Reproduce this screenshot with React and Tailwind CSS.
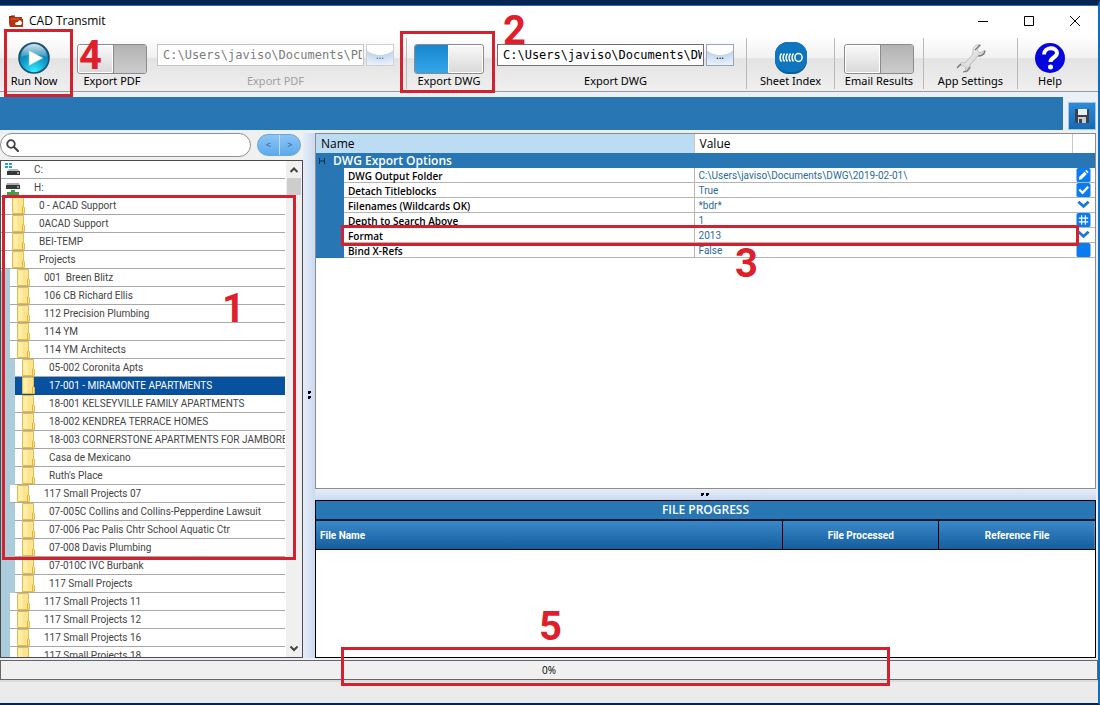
import React from "react";

const drives = ["C:", "H:"];

const folders = [
  { name: "0 - ACAD Support" },
  { name: "0ACAD Support" },
  { name: "BEI-TEMP" },
  {
    name: "Projects",
    children: [
      { name: "001  Breen Blitz" },
      { name: "106 CB Richard Ellis" },
      { name: "112 Precision Plumbing" },
      { name: "114 YM" },
      {
        name: "114 YM Architects",
        children: [
          { name: "05-002 Coronita Apts" },
          { name: "17-001 - MIRAMONTE APARTMENTS", selected: true },
          { name: "18-001 KELSEYVILLE FAMILY APARTMENTS" },
          { name: "18-002 KENDREA TERRACE HOMES" },
          { name: "18-003 CORNERSTONE APARTMENTS FOR JAMBORE.." },
          { name: "Casa de Mexicano" },
          { name: "Ruth's Place" },
        ],
      },
      {
        name: "117 Small Projects 07",
        children: [
          { name: "07-005C Collins and Collins-Pepperdine Lawsuit" },
          { name: "07-006 Pac Palis Chtr School Aquatic Ctr" },
          { name: "07-008 Davis Plumbing" },
          { name: "07-010C IVC Burbank" },
          { name: "117 Small Projects" },
        ],
      },
      { name: "117 Small Projects 11" },
      { name: "117 Small Projects 12" },
      { name: "117 Small Projects 16" },
      { name: "117 Small Projects 18" },
    ],
  },
];

const options = [
  { name: "DWG Output Folder", value: "C:\\Users\\javiso\\Documents\\DWG\\2019-02-01\\", icon: "edit" },
  { name: "Detach Titleblocks", value: "True", icon: "check" },
  { name: "Filenames (Wildcards OK)", value: "*bdr*", icon: "down" },
  { name: "Depth to Search Above", value: "1", icon: "number" },
  { name: "Format", value: "2013", icon: "down" },
  { name: "Bind X-Refs", value: "False", icon: "empty" },
];

const AppIcon = () => (
  <svg viewBox="0 0 14 12" className="h-3 w-[14px]">
    <path d="M0 1h5l1 1h7v2h1v8H1L0 9z" fill="#b5330f" />
    <path d="M0 3 2 1h4" stroke="#6d1c05" fill="none" />
    <path d="M6 9c0-2 2-2 3-2 0-1 2-2 3-1l1 2-1 2H7z" fill="#fff" />
    <path d="M2 4h8" stroke="#e0683c" />
  </svg>
);

const PlayIcon = () => (
  <svg viewBox="0 0 32 32" className="size-8">
    <defs>
      <radialGradient id="play" cx="50%" cy="95%" r="85%">
        <stop offset="0" stopColor="#35f0ff" />
        <stop offset="0.5" stopColor="#12a3cf" />
        <stop offset="1" stopColor="#0a6b9d" />
      </radialGradient>
      <linearGradient id="shine" x2="0" y2="1">
        <stop offset="0" stopColor="#fff" stopOpacity="0.85" />
        <stop offset="1" stopColor="#fff" stopOpacity="0.15" />
      </linearGradient>
    </defs>
    <circle cx="16" cy="16" r="15" fill="url(#play)" stroke="#1a4f75" strokeWidth="1.6" />
    <path d="M3 15a13 13 0 0 1 26 0c-7-3-19-3-26 0z" fill="url(#shine)" />
    <path d="M11 8.500v15L25 16z" fill="#fff" stroke="#8ad0e8" strokeWidth="0.5" />
  </svg>
);

const SheetIcon = () => (
  <svg viewBox="0 0 32 32" className="size-8">
    <path d="M13 0h6a13 13 0 0 1 13 13v6c0 7-7 13-13 13h-6C7 32 0 26 0 19v-6A13 13 0 0 1 13 0z" fill="#0a5c9e" />
    <path d="M13 0h6a13 13 0 0 1 13 13v5c0 7-7 12-13 12h-6C7 30 0 25 0 18v-5A13 13 0 0 1 13 0z" fill="#0f75bf" />
    <g fill="none" stroke="#fff" strokeWidth="1.500">
      <path d="M6.500 11.500q-3 4 0 8M9.500 11.500q-3 4 0 8M12.500 11.500q-3 4 0 8M15.500 11.500q-3 4 0 8M18.500 11.500q-3 4 0 8" />
      <ellipse cx="23.500" cy="15.500" rx="3.600" ry="3.900" />
    </g>
  </svg>
);

const WrenchIcon = () => (
  <svg viewBox="0 0 32 32" className="size-8">
    <defs>
      <linearGradient id="steel" x2="1" y2="1">
        <stop offset="0" stopColor="#fafafa" />
        <stop offset="0.55" stopColor="#dedede" />
        <stop offset="1" stopColor="#8d8d8d" />
      </linearGradient>
    </defs>
    <path
      d="M26 3c-4-1-8 1-8 5l0 4-8 9c-3-1-5 0-7 3l5-1 3 3-1 4c4 0 6-3 5-7l8-9c4 1 7-1 7-6l-5 3-3-3z"
      fill="url(#steel)"
      stroke="#b5b5b5"
      strokeWidth="0.800"
    />
    <path d="M20 8l5-5M2 26l4-4M8 30l4-1 3-4M23 14c3 0 6-1 7-5" stroke="#777" fill="none" strokeWidth="1.200" />
  </svg>
);

const HelpIcon = () => (
  <svg viewBox="0 0 30 30" className="my-px size-[30px]">
    <circle cx="15" cy="15" r="15" fill="#0505dc" />
    <path d="M9 11.500c0-8 13-8 13-1.500 0 4.500-6.500 4.500-6.500 9" stroke="#fff" strokeWidth="4" fill="none" />
    <circle cx="15.500" cy="24" r="2.500" fill="#fff" />
  </svg>
);

const FolderIcon = () => (
  <svg viewBox="0 0 13 17" className="h-[17px] w-[13px] shrink-0">
    <path d="M.5.500h11v9l1 1v6H.5z" fill="#fbe48b" stroke="#e0bd53" />
    <path d="M1.500 1.500h4v14h-4z" fill="#fdeea9" />
    <path d="M10.500 16v-5l1-2" stroke="#d9b23e" fill="none" />
  </svg>
);

const DriveIcon = ({ network }) => (
  <svg viewBox="0 0 16 16" className="size-4 shrink-0">
    {network ? (
      <>
        <path d="M2 3h12l1 3v3H1V6z" fill="#a9adb0" />
        <path d="M1 5h14v4H1z" fill="#35393c" />
        <path d="M6 10h4v2h4v3H2v-3h4z" fill="#3f9f4c" />
        <path d="M12 7h2" stroke="#fff" />
      </>
    ) : (
      <>
        <path d="M0 1h3v2H0zM4 1h3v2H4zM0 4h3v2H0zM4 4h3v2H4z" fill="#29a5c4" />
        <path d="M4 7h9l2 3H2z" fill="#b5b9bc" />
        <path d="M2 9h13v4H2z" fill="#35393c" />
        <path d="M12 11h2" stroke="#fff" />
      </>
    )}
  </svg>
);

const SaveIcon = () => (
  <svg viewBox="0 0 14 14" className="size-[14px]">
    <path d="M0 0h14v14H1L0 13z" fill="#3c4048" />
    <path d="M3 0h9v6H3z" fill="#e9eef2" />
    <path d="M3 8h8v6H3z" fill="#c9cdd2" />
    <path d="M4 10h3v4H4z" fill="#3c4048" />
  </svg>
);

const OptionIcon = ({ type }) => (
  <svg viewBox="0 0 15 15" className="block h-[14px] w-[15px]">
    {type === "down" ? (
      <path d="M2 4l5.500 5L13 4" stroke="#1b7ad6" strokeWidth="3" fill="none" />
    ) : (
      <rect width="15" height="15" rx="2" fill="#0a7cf0" />
    )}
    {type === "edit" && <path d="M2.500 12.500l.5-3L8.500 4l2.500 2.500L5.500 12zM9.300 3.200l1.200-1.200 2.500 2.500-1.200 1.200z" fill="#fff" />}
    {type === "check" && <path d="M3 7l3.500 3.500L12.500 4" stroke="#fff" strokeWidth="2.400" fill="none" />}
    {type === "number" && <path d="M5.500 2.500v10M9.500 2.500v10M2.500 5.500h10M2.500 9.500h10" stroke="#fff" strokeWidth="1.200" />}
  </svg>
);

const Separator = () => <div className="my-[2px] w-px self-stretch bg-[#b9b9b9]" />;

const ToolButton = ({ icon, label, className }) => (
  <button type="button" className={`flex shrink-0 flex-col items-center pt-[6px] ${className}`}>
    {icon}
    <span className="whitespace-nowrap text-[11px] leading-[14px]">{label}</span>
  </button>
);

const Toggle = ({ label, checked, className }) => (
  <label className={`flex w-[70px] shrink-0 flex-col items-center pt-2 ${className}`}>
    <input type="checkbox" defaultChecked={checked} className="sr-only" />
    <span className="flex h-[30px] w-full overflow-hidden rounded-[3px] border border-[#8b8b8b]">
      {checked && <span className="flex-1 bg-linear-to-b from-[#1387cf] to-[#35a5ea]" />}
      <span className="flex-1 rounded-[2px] border border-white bg-linear-to-b from-[#f8f8f8] to-[#dadada]" />
      {!checked && <span className="flex-1 border-l border-[#8b8b8b] bg-linear-to-b from-[#b3b3b3] to-[#cccccc]" />}
    </span>
    <span className="whitespace-nowrap text-[11px] leading-[14px]">{label}</span>
  </label>
);

const PathField = ({ id, label, value, disabled }) => (
  <div className="flex min-w-0 flex-1 flex-col gap-2 pt-2">
    <div className="flex gap-[2px]">
      <input
        id={id}
        type="text"
        defaultValue={value}
        disabled={disabled}
        className={`h-[22px] min-w-0 flex-1 border bg-white pr-px pl-[5px] font-['DejaVu_Sans_Mono',monospace] text-[12px] ${
          disabled ? "border-[#c4c4c4] text-[#7d7d7d]" : "border-[#6f6f6f] text-black"
        }`}
      />
      <button
        type="button"
        disabled={disabled}
        aria-label={`Browse ${label}`}
        className={`h-[22px] w-7 border bg-[radial-gradient(ellipse_60%_50%_at_50%_0%,#ffffff_96%,#c3d6ee_100%,#e9f1fb_200%)] text-[10px] leading-[14px] ${
          disabled ? "border-[#d0d0d0] text-[#4b5f7d]" : "border-[#9aa5b3] text-black"
        }`}
      >
        ...
      </button>
    </div>
    <label htmlFor={id} className={`text-center text-[11px] leading-[14px] ${disabled ? "text-[#a0a0a0]" : ""}`}>
      {label}
    </label>
  </div>
);

const TreeNode = ({ node, depth }) => (
  <li>
    <button
      type="button"
      className={`flex h-[18px] w-full items-center gap-[14px] border-b text-left ${depth === 0 ? "pl-[11px]" : "pl-[7px]"} ${
        node.selected ? "border-[#0a4c94] bg-[#07519f] text-white" : "border-[#a8a8a8] bg-white text-[#444]"
      }`}
    >
      <FolderIcon />
      <span className="whitespace-pre">{node.name}</span>
    </button>
    {node.children && (
      <ul className={`rounded-l-[4px] bg-[#abcddb] ${depth === 0 ? "pl-[9px]" : "pl-[5px]"}`}>
        {node.children.map((child) => (
          <TreeNode key={child.name} node={child} depth={depth + 1} />
        ))}
      </ul>
    )}
  </li>
);

// red callout number
const Step = ({ n, className }) => (
  <span className={`pointer-events-none absolute z-20 font-['Roboto',sans-serif] text-[40px] font-bold leading-none text-[#e01f2d] ${className}`}>
    {n}
  </span>
);

// red callout frame
const Frame = ({ className }) => (
  <span className={`pointer-events-none absolute z-10 border-[3px] border-[#d3222f] ${className}`} />
);

const App = () => {
  return (
    <div className="flex h-screen flex-col border-r-2 border-t-[5px] border-b-2 border-t-[#032655] border-r-[#0f6fbe] border-b-[#032655] bg-[#ebf0f6] font-['Noto_Sans','Open_Sans',sans-serif] text-[11px] text-black">
      {/* title bar */}
      <header className="flex h-[31px] shrink-0 items-center border-t border-[#2f66a8] bg-white pl-[9px] pr-[17px]">
        <AppIcon />
        <h1 className="flex-1 pl-[6px] font-['Open_Sans',sans-serif] text-[12px]">CAD Transmit</h1>
        <div className="flex gap-[34px]">
          <button type="button" aria-label="Minimize">
            <svg viewBox="0 0 12 12" className="size-3"><path d="M1 6.500h10" stroke="#000" /></svg>
          </button>
          <button type="button" aria-label="Maximize">
            <svg viewBox="0 0 12 12" className="size-3"><path d="M1.500 1.500h9v9h-9z" stroke="#000" fill="none" /></svg>
          </button>
          <button type="button" aria-label="Close">
            <svg viewBox="0 0 12 12" className="size-3"><path d="M1 1l10 10M11 1L1 11" stroke="#000" fill="none" /></svg>
          </button>
        </div>
      </header>

      {/* toolbar */}
      <div className="flex h-14 shrink-0 border-b border-[#9b9b9b] bg-[linear-gradient(#ffffff,#f1f1f1_40%,#e3e3e3_41%,#efefef)] pr-4">
        <div className="relative flex">
          <ToolButton icon={<PlayIcon />} label="Run Now" className="w-[68px]" />
          <Frame className="-top-[7px] left-1 h-[68px] w-[69px]" />
        </div>
        <div className="relative mr-[10px] ml-[9px]">
          <Toggle label="Export PDF" />
          <Step n="4" className="top-0 left-[2px]" />
        </div>
        <PathField id="pdf-path" label="Export PDF" value="C:\Users\javiso\Documents\PDF" disabled />
        <div className="relative mr-[13px] ml-3 flex">
          <Separator />
          <Toggle label="Export DWG" checked className="ml-[7px]" />
          <Frame className="-top-[5px] -right-[11px] -left-[6px] h-[62px]" />
          <Step n="2" className="-top-[25px] left-[97px]" />
        </div>
        <PathField id="dwg-path" label="Export DWG" value="C:\Users\javiso\Documents\DWG" />
        <div className="w-3" />
        <Separator />
        <ToolButton icon={<SheetIcon />} label="Sheet Index" className="w-[87px]" />
        <Separator />
        <Toggle label="Email Results" className="mx-[9px]" />
        <Separator />
        <ToolButton icon={<WrenchIcon />} label="App Settings" className="w-[93px]" />
        <Separator />
        <ToolButton icon={<HelpIcon />} label="Help" className="w-16" />
      </div>

      {/* blue band with save */}
      <div className="mt-[5px] flex h-[33px] shrink-0 items-center gap-[5px] pr-[2px]">
        <div className="h-full flex-1 bg-[#2876b4]" />
        <button type="button" aria-label="Save" className="mt-1 flex size-7 items-center justify-center border border-[#9cc6ea] bg-linear-to-b from-[#2d8ad6] to-[#1769b4]">
          <SaveIcon />
        </button>
      </div>

      <main className="mt-[3px] flex min-h-0 flex-1">
        {/* folder tree */}
        <aside className="flex w-[303px] shrink-0 flex-col bg-[#f0f0f0]">
          <div className="mb-[2px] flex h-[25px] shrink-0 gap-[6px] pr-[2px]">
            <label className="flex h-6 flex-1 items-center rounded-full border border-[#8f8f8f] bg-white pl-[5px]">
              <svg viewBox="0 0 13 13" className="size-[13px]">
                <circle cx="5" cy="5" r="3.800" fill="none" stroke="#444" strokeWidth="1.800" />
                <path d="M8 8l4 4" stroke="#444" strokeWidth="2.200" strokeLinecap="round" />
              </svg>
              <input type="text" aria-label="Search folders" className="ml-2 min-w-0 flex-1 outline-none" />
            </label>
            <div className="mt-px flex h-[22px] w-11 overflow-hidden rounded-full border border-[#6ba6dc] bg-linear-to-b from-[#8cc4f4] to-[#5caaee] text-[9px] text-[#2d5f91]">
              <button type="button" aria-label="Previous" className="flex-1 border-r border-[#c4e0f8]">&lt;</button>
              <button type="button" aria-label="Next" className="flex-1">&gt;</button>
            </div>
          </div>
          <div className="relative flex min-h-0 flex-1 border border-[#4a4a4a] bg-white">
            <div className="min-w-0 flex-1 overflow-hidden font-['Roboto',sans-serif] text-[10px] leading-[14px]">
              <ul>
                {drives.map((drive) => (
                  <li key={drive}>
                    <button type="button" className="flex h-[18px] w-full items-center gap-[13px] border-b border-[#a8a8a8] pl-1 text-left text-[#444]">
                      <DriveIcon network={drive === "H:"} />
                      {drive}
                    </button>
                  </li>
                ))}
                {folders.map((node) => (
                  <TreeNode key={node.name} node={node} depth={0} />
                ))}
              </ul>
            </div>
            <div className="ml-px flex w-4 flex-col items-center bg-[#f0f0f0]">
              <svg viewBox="0 0 16 17" className="h-[17px] w-4"><path d="M4.500 11L8 7.500l3.500 3.500" stroke="#444" strokeWidth="2" fill="none" /></svg>
              <div className="h-[17px] w-[14px] bg-[#cdcdcd]" />
              <div className="flex-1" />
              <svg viewBox="0 0 16 17" className="h-[17px] w-4"><path d="M4.500 6.500L8 10l3.500-3.500" stroke="#444" strokeWidth="2" fill="none" /></svg>
            </div>
            <Frame className="top-[34px] left-px h-[365px] w-[294px]" />
            <Step n="1" className="top-[128px] left-[221px]" />
          </div>
        </aside>

        <div className="flex w-3 shrink-0 items-center justify-center bg-linear-to-r from-[#e6edf8] to-[#cbdaf0]">
          <svg viewBox="0 0 3 9" className="h-[9px] w-[3px]"><path d="M0 0h3v2H2v1H0zM0 5h3v2H2v1H0z" /></svg>
        </div>

        <section className="mr-[2px] flex min-w-0 flex-1 flex-col">
          {/* property grid */}
          <div className="relative min-h-0 flex-1 border border-[#8c8c8c] bg-white">
            <table className="w-full table-fixed border-separate border-spacing-0 text-left font-['Open_Sans',sans-serif] text-[10px] leading-[14px]">
              <colgroup>
                <col className="w-7" />
                <col className="w-[45%]" />
                <col />
                <col className="w-[22px]" />
              </colgroup>
              <thead>
                <tr className="text-[12px] leading-[19px]">
                  <th colSpan={2} className="border-r border-[#c8c8c8] bg-[#bcdcf4] pl-[5px] font-normal">Name</th>
                  <th className="border-r border-[#c8c8c8] pl-[5px] font-normal">Value</th>
                  <th />
                </tr>
              </thead>
              <tbody>
                <tr className="bg-[#2876b4] text-[12px] text-white">
                  <th colSpan={4} className="font-semibold">
                    <span className="flex h-[15px] items-center gap-2 pl-[3px]">
                      <svg viewBox="0 0 6 6" className="size-[6px]"><path d="M.5 0v6M5.500 0v6M1 3h4" stroke="#0b2d52" /></svg>
                      DWG Export Options
                    </span>
                  </th>
                </tr>
                {options.map((option) => (
                  <tr key={option.name}>
                    <td className="bg-[#2876b4]" />
                    <th className="border-r border-b border-[#b5b5b5] pt-[2px] pl-1 leading-3 font-semibold">{option.name}</th>
                    <td className="border-b border-[#b5b5b5] pt-[2px] pl-1 font-['Roboto',sans-serif] leading-3 text-[#2a6a9c]">{option.value}</td>
                    <td className="border-b border-[#b5b5b5] pl-[3px]">
                      <button type="button" aria-label={`Edit ${option.name}`} className="block">
                        <OptionIcon type={option.icon} />
                      </button>
                    </td>
                  </tr>
                ))}
              </tbody>
            </table>
            <Frame className="top-[91px] right-4 left-[25px] h-[21px]" />
            <Step n="3" className="top-[110px] left-[419px]" />
          </div>

          <div className="flex h-[11px] shrink-0 items-center justify-center bg-linear-to-b from-[#e6edf8] to-[#cbdaf0]">
            <svg viewBox="0 0 9 3" className="h-[3px] w-[9px]"><path d="M0 0h3v2H2v1H0zM5 0h3v2H7v1H5z" /></svg>
          </div>

          {/* file progress */}
          <div className="h-[158px] shrink-0 border border-black bg-white">
            <table className="w-full table-fixed border-separate border-spacing-0 font-['Open_Sans',sans-serif] text-[10px] text-white">
              <colgroup>
                <col className="w-3/5" />
                <col className="w-1/5" />
                <col className="w-1/5" />
              </colgroup>
              <thead>
                <tr>
                  <th colSpan={3} className="h-[20px] border-b-2 border-[#06182f] bg-[#2876b4] text-[12px] leading-[18px] font-semibold">FILE PROGRESS</th>
                </tr>
                <tr className="bg-linear-to-b from-[#3a88c8] to-[#125d9d] font-['Roboto',sans-serif]">
                  <th className="h-[29px] border-r border-b border-black pl-1 text-left">File Name</th>
                  <th className="border-r border-b border-black">File Processed</th>
                  <th className="border-b border-black">Reference File</th>
                </tr>
              </thead>
            </table>
          </div>
        </section>
      </main>

      {/* overall progress */}
      <footer className="relative shrink-0">
        <div role="progressbar" aria-valuenow={0} className="mt-[2px] flex h-5 items-center justify-center border border-[#666] bg-[#f0f0f0] font-['Open_Sans',sans-serif] text-[10px]">
          0%
        </div>
        <div className="h-[23px] border-t-2 border-[#dcdcdc] bg-[#ebebeb]" />
        <Frame className="-top-[11px] left-[341px] h-[39px] w-1/2" />
        <Step n="5" className="-top-[51px] left-[539px]" />
      </footer>
    </div>
  );
};

export default App;
